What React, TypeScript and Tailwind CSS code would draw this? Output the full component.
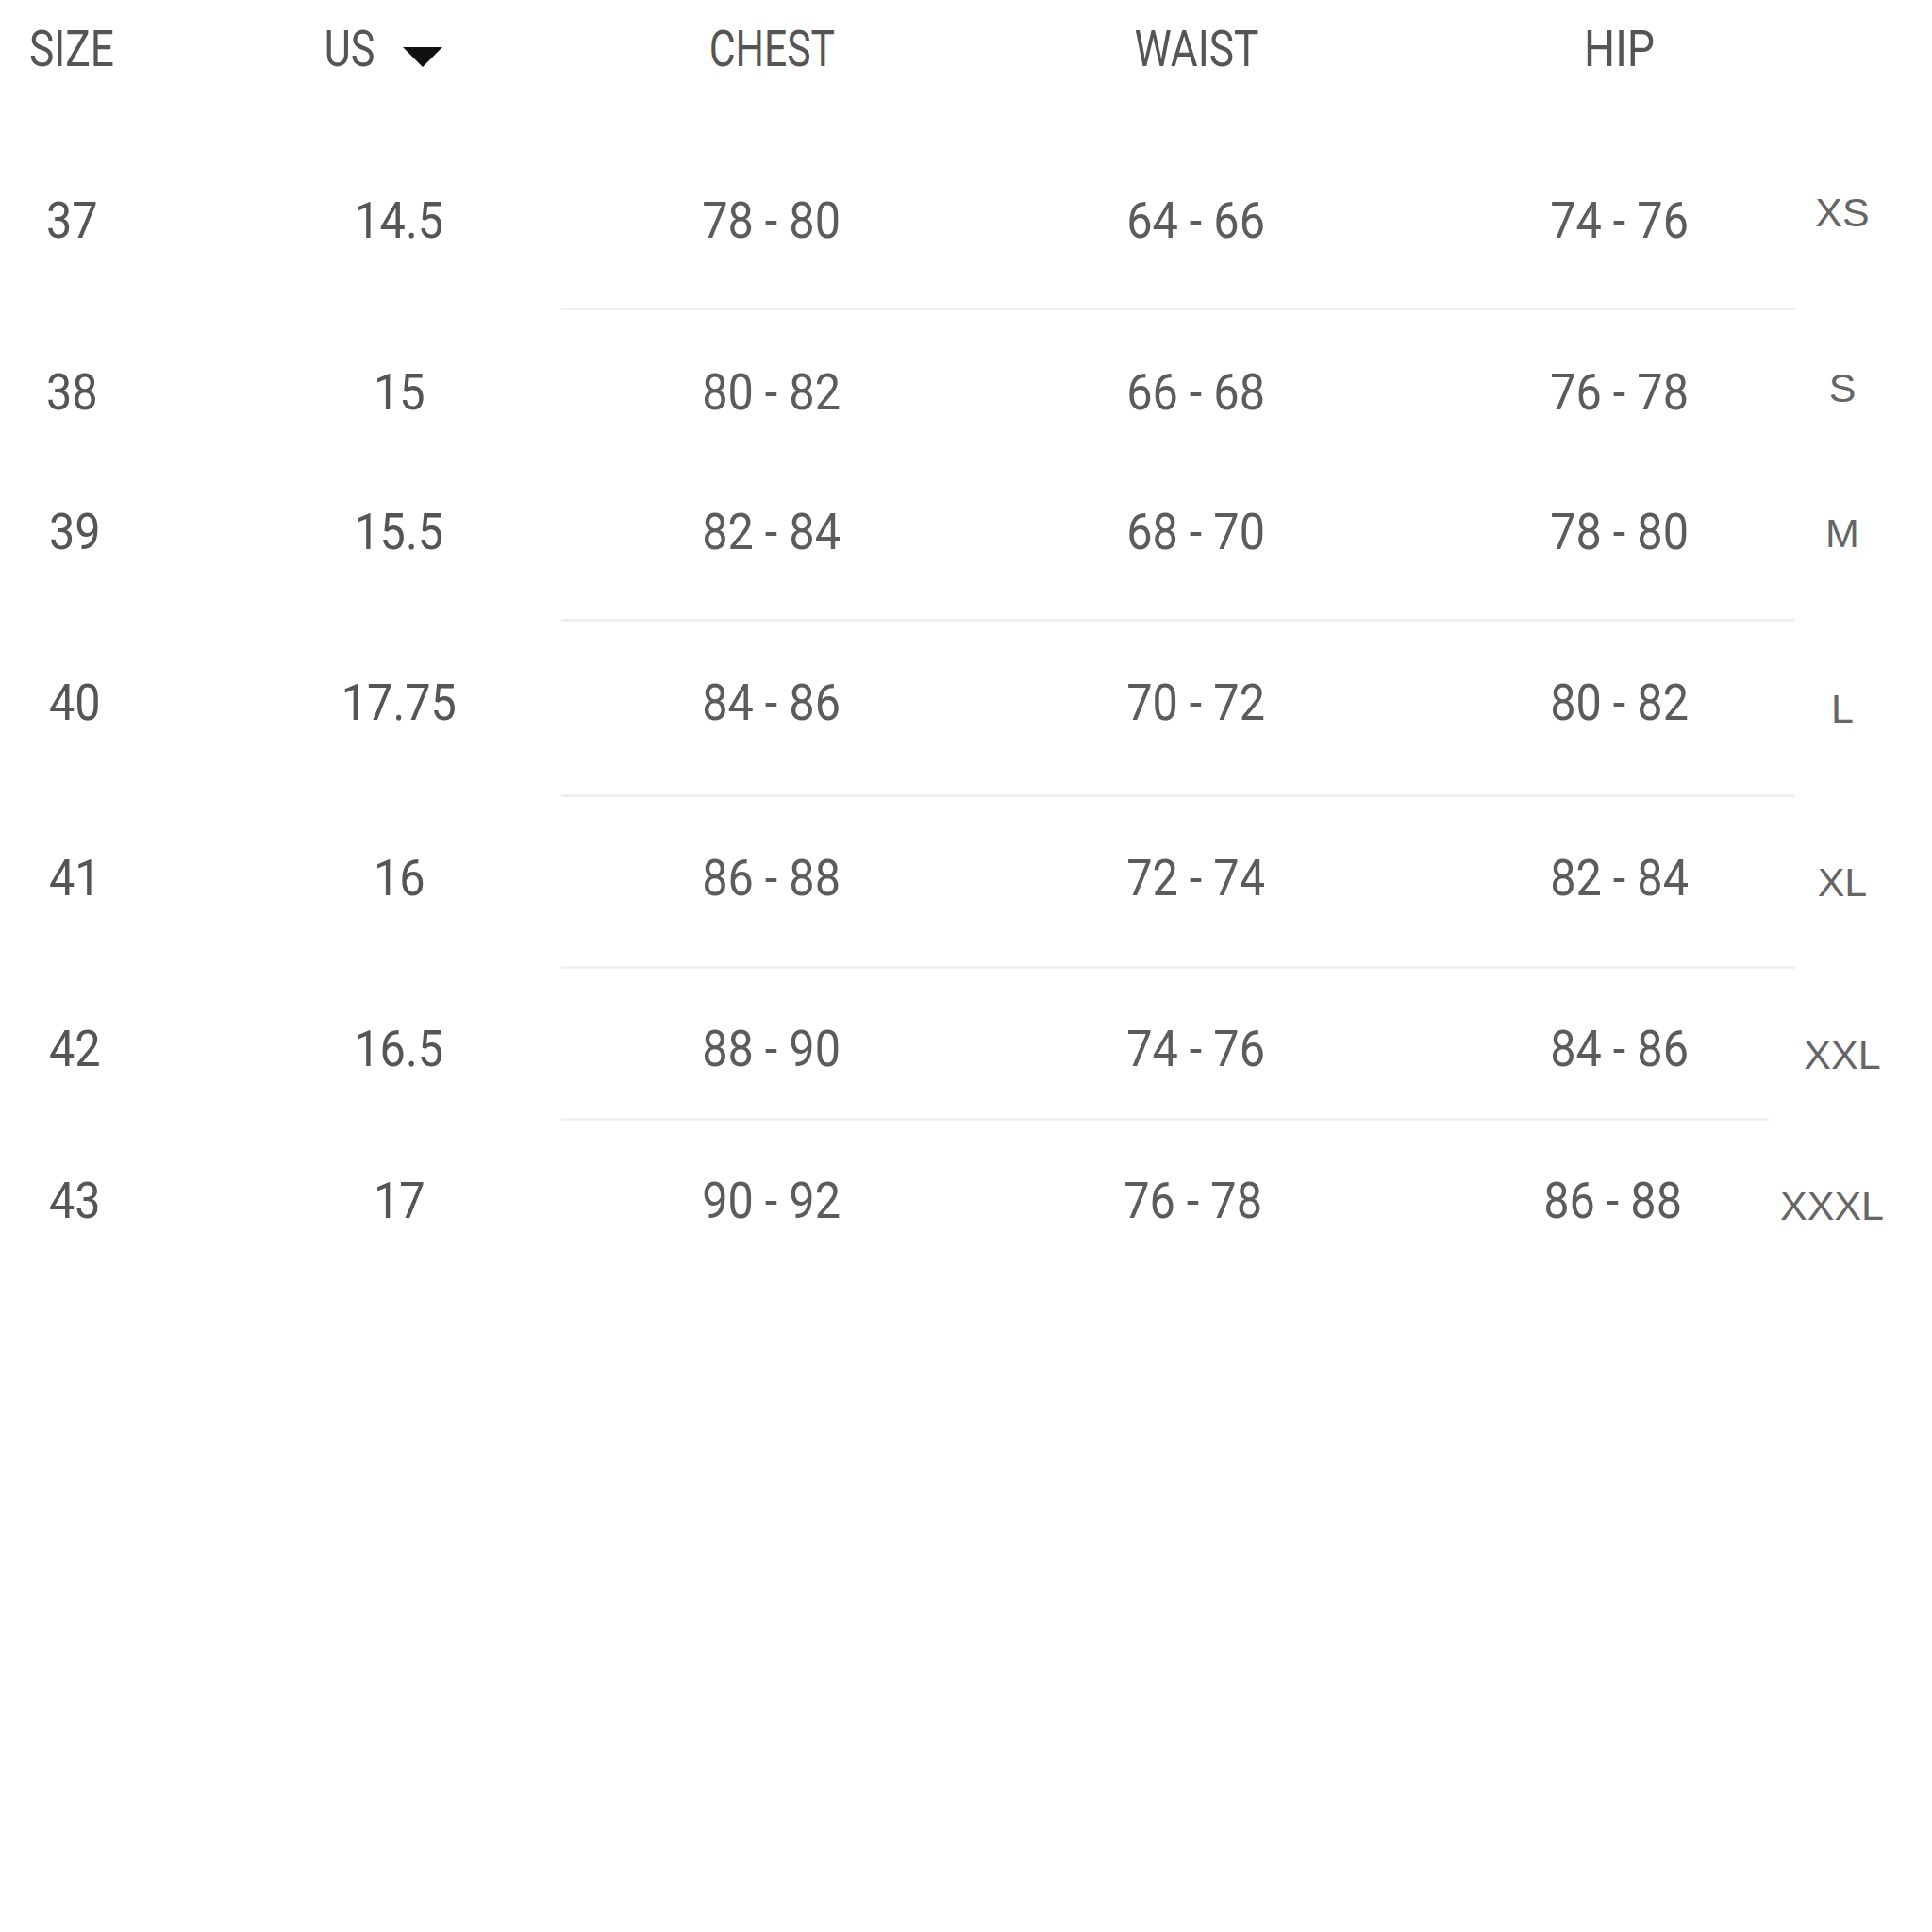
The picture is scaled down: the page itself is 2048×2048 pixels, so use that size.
import React from 'react';

type SizeRow = {
  size: string;
  us: string;
  chest: string;
  waist: string;
  hip: string;
  label: string;
  rowClass: string;
  labelClass: string;
  sizeClass?: string;
  waistClass?: string;
  hipClass?: string;
  divider?: string;
};

const rows: SizeRow[] = [
  { size: '37', us: '14.5', chest: '78 - 80', waist: '64 - 66', hip: '74 - 76', label: 'XS', rowClass: 'mt-[100px]', labelClass: 'mb-[17px]', divider: 'mt-[62px] w-[1308px]' },
  { size: '38', us: '15', chest: '80 - 82', waist: '66 - 68', hip: '76 - 78', label: 'S', rowClass: 'mt-[57px]', labelClass: 'mb-[9px]' },
  { size: '39', us: '15.5', chest: '82 - 84', waist: '68 - 70', hip: '78 - 80', label: 'M', rowClass: 'mt-[88px]', labelClass: 'mt-[2px]', sizeClass: 'pl-[6px]', divider: 'mt-[62px] w-[1308px]' },
  { size: '40', us: '17.75', chest: '84 - 86', waist: '70 - 72', hip: '80 - 82', label: 'L', rowClass: 'mt-[56px]', labelClass: 'mt-[12px]', sizeClass: 'pl-[6px]', divider: 'mt-[67px] w-[1308px]' },
  { size: '41', us: '16', chest: '86 - 88', waist: '72 - 74', hip: '82 - 84', label: 'XL', rowClass: 'mt-[56px]', labelClass: 'mt-[8px]', sizeClass: 'pl-[6px]', divider: 'mt-[63px] w-[1308px]' },
  { size: '42', us: '16.5', chest: '88 - 90', waist: '74 - 76', hip: '84 - 86', label: 'XXL', rowClass: 'mt-[55px]', labelClass: 'mt-[13px]', sizeClass: 'pl-[6px]', divider: 'mt-[43px] w-[1280px]' },
  { size: '43', us: '17', chest: '90 - 92', waist: '76 - 78', hip: '86 - 88', label: 'XXXL', rowClass: 'mt-[55px]', labelClass: 'mt-[10px] pr-[22px]', sizeClass: 'pl-[6px]', waistClass: 'pr-[6px]', hipClass: 'pr-[14px]' },
];

const Narrow = ({ children, className = 'scale-x-90' }: { children: React.ReactNode; className?: string }) => (
  <span className={`inline-block whitespace-pre ${className}`}>{children}</span>
);

const App: React.FC = () => {
  return (
    <div className="w-[2048px] h-[2048px] bg-white [font-family:Roboto,sans-serif]">
      {/* header */}
      <div className="flex h-[104px] items-center text-[54px] leading-none text-[#555]">
        <div className="w-[152px] text-center">
          <Narrow className="scale-x-[0.82]">SIZE</Narrow>
        </div>
        <div className="w-[542px] flex items-center justify-center gap-[22px] pr-[40px]">
          <Narrow className="scale-x-[0.8]">US</Narrow>
          <svg width="42" height="21" viewBox="0 0 42 21" className="mt-[16px]">
            <polygon points="0,0 42,0 21,21" fill="#111" />
          </svg>
        </div>
        <div className="w-[248px] text-center">
          <Narrow className="scale-x-[0.79]">CHEST</Narrow>
        </div>
        <div className="w-[652px] text-center">
          <Narrow className="scale-x-[0.82]">WAIST</Narrow>
        </div>
        <div className="w-[246px] text-center">
          <Narrow className="scale-x-[0.86]">HIP</Narrow>
        </div>
      </div>

      {rows.map((r) => (
        <React.Fragment key={r.size}>
          <div className={`flex h-[60px] items-center text-[54px] leading-none ${r.rowClass}`}>
            <div className={`w-[152px] text-center text-[#555] ${r.sizeClass ?? ''}`}>
              <Narrow>{r.size}</Narrow>
            </div>
            <div className="w-[542px] text-center text-[#555]">
              <Narrow>{r.us}</Narrow>
            </div>
            <div className="w-[248px] text-center text-[#5c5c5c]">
              <Narrow>{r.chest}</Narrow>
            </div>
            <div className={`w-[652px] text-center text-[#5c5c5c] ${r.waistClass ?? ''}`}>
              <Narrow>{r.waist}</Narrow>
            </div>
            <div className={`w-[246px] text-center text-[#5c5c5c] ${r.hipClass ?? ''}`}>
              <Narrow>{r.hip}</Narrow>
            </div>
            <div
              className={`ml-[20px] w-[186px] text-center text-[43px] leading-none text-[#666] [font-family:'Liberation_Sans',Arial,sans-serif] ${r.labelClass}`}
            >
              {r.label}
            </div>
          </div>
          {r.divider && <div className={`ml-[595px] h-[3px] bg-[#efefef] ${r.divider}`} />}
        </React.Fragment>
      ))}
    </div>
  );
};

export default App;
